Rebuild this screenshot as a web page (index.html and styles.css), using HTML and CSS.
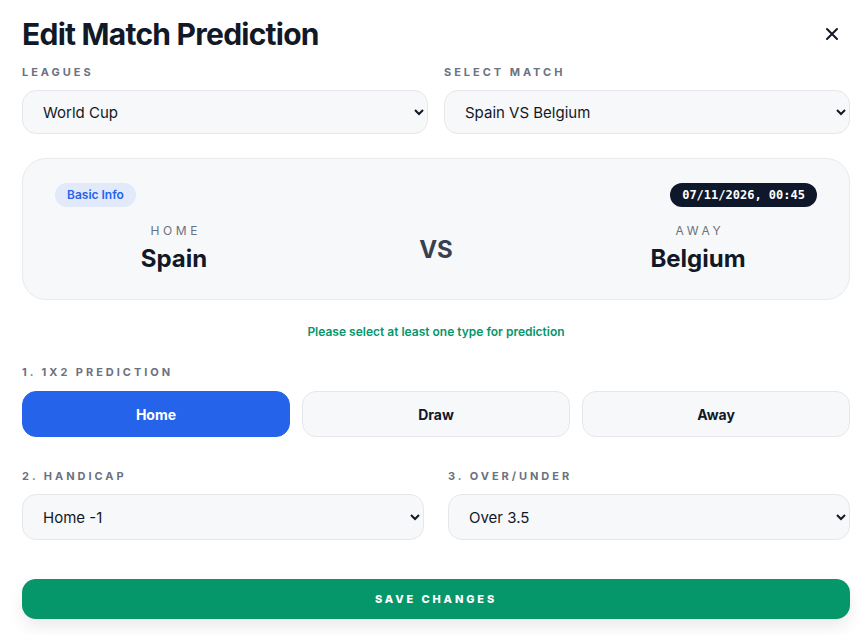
FILE: index.html
```html
<!DOCTYPE html>
<html lang="en">
<head>
    <meta charset="UTF-8">
    <meta name="viewport" content="width=device-width, initial-scale=1.0">
    <title>Edit Match Prediction</title>

    <link rel="stylesheet" href="styles.css">
</head>
<body>
    <div class="modal">
        <div class="modal-header">
            <h1>Edit Match Prediction</h1>
            <button class="close-btn" aria-label="Close">
                <svg width="14" height="14" viewBox="0 0 14 14">
                    <path d="M2 2 L12 12 M12 2 L2 12" stroke="#111827" stroke-width="2" stroke-linecap="round"/>
                </svg>
            </button>
        </div>

        <div class="row two">
            <div class="field">
                <label class="label">Leagues</label>
                <select class="input">
                    <option>World Cup</option>
                </select>
            </div>
            <div class="field">
                <label class="label">Select Match</label>
                <select class="input">
                    <option>Spain VS Belgium</option>
                </select>
            </div>
        </div>

        <div class="match-card">
            <div class="card-top">
                <span class="badge">Basic Info</span>
                <span class="date">07/11/2026, 00:45</span>
            </div>
            <div class="teams">
                <div class="team">
                    <p class="side">Home</p>
                    <p class="team-name">Spain</p>
                </div>
                <div class="vs">VS</div>
                <div class="team">
                    <p class="side">Away</p>
                    <p class="team-name">Belgium</p>
                </div>
            </div>
        </div>

        <p class="hint">Please select at least one type for prediction</p>

        <div class="section">
            <p class="label">1. 1X2 Prediction</p>
            <div class="options">
                <button class="option active">Home</button>
                <button class="option">Draw</button>
                <button class="option">Away</button>
            </div>
        </div>

        <div class="row two wide-gap">
            <div class="field">
                <label class="label">2. Handicap</label>
                <select class="input tall">
                    <option>Home -1</option>
                </select>
            </div>
            <div class="field">
                <label class="label">3. Over/Under</label>
                <select class="input tall">
                    <option>Over 3.5</option>
                </select>
            </div>
        </div>

        <button class="save-btn">Save Changes</button>
    </div>
</body>
</html>
```

FILE: styles.css
```css
* {
    margin: 0;
    padding: 0;
    box-sizing: border-box;
}

body {
    background-color: #ffffff;
    font-family: Inter, "Noto Sans", sans-serif;
    color: #111827;
}

.modal {
    padding: 14px 16px 16px 22px;
}

.modal-header {
    display: flex;
    justify-content: space-between;
    align-items: center;
    margin-bottom: 10px;
}

h1 {
    font-size: 30px;
    line-height: 40px;
    font-weight: 700;
    letter-spacing: -0.025em;
    color: #111827;
}

.close-btn {
    width: 36px;
    height: 36px;
    border: none;
    background: none;
    display: flex;
    justify-content: center;
    align-items: center;
    cursor: pointer;
}

.row.two {
    display: grid;
    grid-template-columns: 1fr 1fr;
    gap: 16px;
}

.row.wide-gap {
    gap: 24px;
    margin-top: 31px;
}

.label {
    display: block;
    font-size: 11px;
    line-height: 16px;
    font-weight: 700;
    letter-spacing: 0.27em;
    text-transform: uppercase;
    color: #6b7280;
    margin-bottom: 10px;
}

.input {
    width: 100%;
    height: 44px;
    padding: 0 8px 0 16px;
    font-family: Inter, "Noto Sans", sans-serif;
    font-size: 15px;
    color: #111827;
    background-color: #f7f8fa;
    border: 1px solid #e5e7eb;
    border-radius: 14px;
    outline: none;
}

.input.tall {
    height: 46px;
}

.match-card {
    margin-top: 24px;
    background-color: #f7f8fa;
    border: 1px solid #e8eaee;
    border-radius: 24px;
    padding: 24px 32px 24px;
}

.card-top {
    display: flex;
    justify-content: space-between;
    align-items: center;
}

.badge {
    background-color: #e2e9fb;
    color: #2563eb;
    font-size: 12px;
    font-weight: 600;
    line-height: 24px;
    padding: 0 12px;
    border-radius: 12px;
}

.date {
    background-color: #0f172a;
    color: #ffffff;
    font-family: "DejaVu Sans Mono", monospace;
    font-size: 12px;
    font-weight: 700;
    line-height: 24px;
    padding: 0 12px;
    border-radius: 12px;
}

.teams {
    display: grid;
    grid-template-columns: 1fr 1fr 1fr;
    gap: 24px;
    align-items: center;
    text-align: center;
    margin-top: 16px;
}

.side {
    font-size: 12px;
    line-height: 16px;
    letter-spacing: 0.3em;
    text-transform: uppercase;
    color: #6b7280;
    padding-left: 0.3em;
}

.team-name {
    font-size: 24px;
    line-height: 32px;
    font-weight: 700;
    color: #111827;
    margin-top: 4px;
}

.vs {
    font-size: 24px;
    font-weight: 700;
    color: #374151;
}

.hint {
    text-align: center;
    font-size: 12px;
    font-weight: 600;
    line-height: 16px;
    color: #059669;
    margin-top: 24px;
}

.section {
    margin-top: 24px;
}

.section .label {
    margin-bottom: 11px;
}

.options {
    display: grid;
    grid-template-columns: repeat(3, 1fr);
    gap: 12px;
}

.option {
    height: 46px;
    font-family: Inter, "Noto Sans", sans-serif;
    font-size: 14px;
    font-weight: 700;
    color: #111827;
    background-color: #f7f8fa;
    border: 1px solid #e5e7eb;
    border-radius: 14px;
    cursor: pointer;
}

.option.active {
    background-color: #2563eb;
    border-color: #2563eb;
    color: #ffffff;
}

.save-btn {
    display: block;
    width: 100%;
    height: 40px;
    margin-top: 39px;
    border: none;
    border-radius: 14px;
    background-color: #059669;
    color: #ffffff;
    font-family: Inter, "Noto Sans", sans-serif;
    font-size: 11px;
    font-weight: 800;
    letter-spacing: 0.26em;
    text-transform: uppercase;
    box-shadow: 0 8px 16px rgba(0, 0, 0, 0.08);
    cursor: pointer;
}
```
